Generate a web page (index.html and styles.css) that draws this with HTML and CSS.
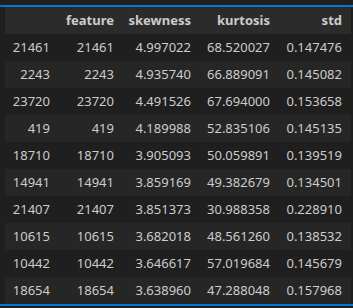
FILE: index.html
```html
<!DOCTYPE html>
<html>
<head>
<meta charset="utf-8">
<link rel="stylesheet" href="styles.css">
</head>
<body>
<div class="output">
  <table class="df">
    <colgroup>
      <col class="c-idx"><col class="c-feat"><col class="c-skew"><col class="c-kurt"><col class="c-std">
    </colgroup>
    <thead>
      <tr><th></th><th>feature</th><th>skewness</th><th>kurtosis</th><th>std</th></tr>
    </thead>
    <tbody>
      <tr><th>21461</th><td>21461</td><td>4.997022</td><td>68.520027</td><td>0.147476</td></tr>
      <tr><th>2243</th><td>2243</td><td>4.935740</td><td>66.889091</td><td>0.145082</td></tr>
      <tr><th>23720</th><td>23720</td><td>4.491526</td><td>67.694000</td><td>0.153658</td></tr>
      <tr><th>419</th><td>419</td><td>4.189988</td><td>52.835106</td><td>0.145135</td></tr>
      <tr><th>18710</th><td>18710</td><td>3.905093</td><td>50.059891</td><td>0.139519</td></tr>
      <tr><th>14941</th><td>14941</td><td>3.859169</td><td>49.382679</td><td>0.134501</td></tr>
      <tr><th>21407</th><td>21407</td><td>3.851373</td><td>30.988358</td><td>0.228910</td></tr>
      <tr><th>10615</th><td>10615</td><td>3.682018</td><td>48.561260</td><td>0.138532</td></tr>
      <tr><th>10442</th><td>10442</td><td>3.646617</td><td>57.019684</td><td>0.145679</td></tr>
      <tr><th>18654</th><td>18654</td><td>3.638960</td><td>47.288048</td><td>0.157968</td></tr>
    </tbody>
  </table>
</div>
</body>
</html>
```
FILE: styles.css
```css
html, body {
  margin: 0;
  padding: 0;
  background: #1f1f1f;
}
body {
  padding-top: 5px;
  font-family: "Noto Sans", "Open Sans", sans-serif;
  font-size: 13px;
  color: #cccccc;
}
.output {
  border-top: 2px solid #0078d4;
  border-bottom: 2px solid #0078d4;
  padding-left: 5px;
}
.df {
  border-collapse: collapse;
  table-layout: fixed;
  width: 346px;
}
.c-idx { width: 54px; }
.c-feat { width: 64px; }
.c-skew { width: 77px; }
.c-kurt { width: 79px; }
.c-std { width: 72px; }
.df th, .df td {
  height: 27px;
  padding: 0 9px 0 0;
  text-align: right;
  vertical-align: middle;
  white-space: nowrap;
  line-height: 27px;
  box-sizing: border-box;
}
.df thead th {
  font-weight: bold;
  background: #2b2b2b;
  color: #cccccc;
}
.df tbody th {
  font-weight: normal;
}
.df tbody tr:nth-child(even) {
  background: #262626;
}
```
